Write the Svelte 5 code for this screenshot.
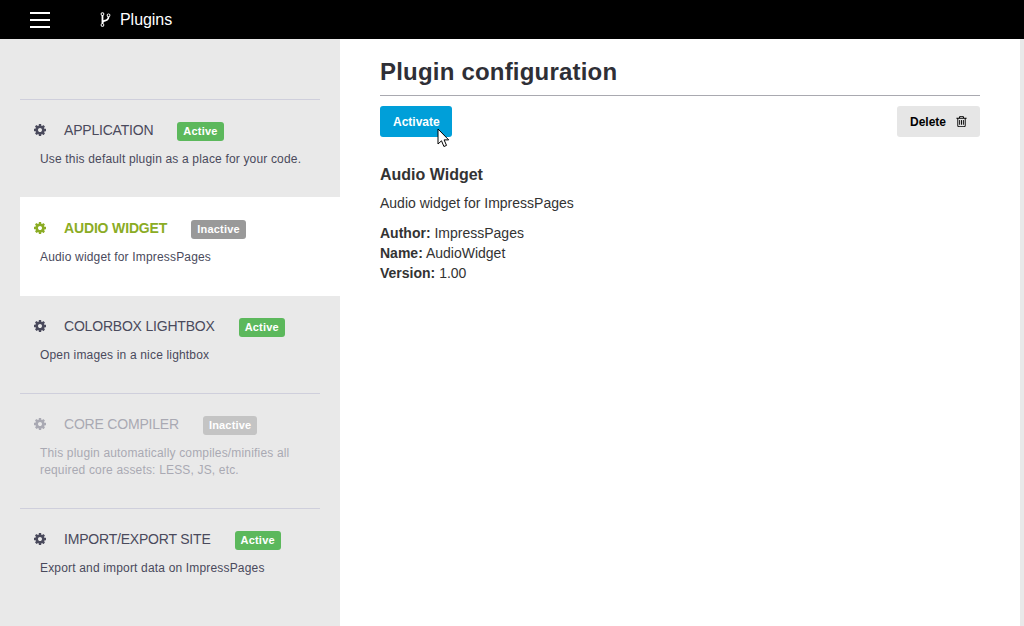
<script>
  const cog = "M1152 896q0-106-75-181t-181-75-181 75-75 181 75 181 181 75 181-75 75-181zm512-109v222q0 12-8 23t-20 13l-185 28q-19 54-39 91 35 50 107 138 10 12 10 25t-9 23q-27 37-99 108t-94 71q-12 0-26-9l-138-108q-44 23-91 38-16 136-29 186-7 28-36 28h-222q-14 0-24.5-8.5t-11.5-21.5l-28-184q-49-16-90-37l-141 107q-10 9-25 9-14 0-25-11-126-114-165-168-7-10-7-23 0-12 8-23 15-21 51-66.5t54-70.5q-27-50-41-99l-183-27q-13-2-21-12.5t-8-23.5v-222q0-12 8-23t19-13l186-28q14-46 39-92-40-57-107-138-10-12-10-24 0-10 9-23 26-36 98.5-107.5t94.5-71.5q13 0 26 10l138 107q44-23 91-38 16-136 29-186 7-28 36-28h222q14 0 24.5 8.5t11.5 21.5l28 184q49 16 90 37l142-107q9-9 24-9 13 0 25 10 129 119 165 170 7 8 7 22 0 12-8 23-15 21-51 66.5t-54 70.5q26 50 41 98l183 28q13 2 21 12.5t8 23.5z";
  const trash = "M704 736v576q0 14-9 23t-23 9h-64q-14 0-23-9t-9-23v-576q0-14 9-23t23-9h64q14 0 23 9t9 23zm256 0v576q0 14-9 23t-23 9h-64q-14 0-23-9t-9-23v-576q0-14 9-23t23-9h64q14 0 23 9t9 23zm256 0v576q0 14-9 23t-23 9h-64q-14 0-23-9t-9-23v-576q0-14 9-23t23-9h64q14 0 23 9t9 23zm128 724v-948h-896v948q0 22 7 40.5t14.5 27 10.5 8.5h832q3 0 10.5-8.5t14.5-27 7-40.5zm-672-1076h448l-48-117q-7-9-17-11h-317q-10 2-17 11zm928 32v64q0 14-9 23t-23 9h-96v948q0 83-47 143.5t-113 60.5h-832q-66 0-113-58.5t-47-141.5v-952h-96q-14 0-23-9t-9-23v-64q0-14 9-23t23-9h309l70-167q15-37 54-63t79-26h320q40 0 79 26t54 63l70 167h309q14 0 23 9t9 23z";
  const fork = "M672 1472q0-40-28-68t-68-28-68 28-28 68 28 68 68 28 68-28 28-68zm0-1152q0-40-28-68t-68-28-68 28-28 68 28 68 68 28 68-28 28-68zm640 128q0-40-28-68t-68-28-68 28-28 68 28 68 68 28 68-28 28-68zm96 0q0 52-26 96.5t-70 69.5q-2 287-226 414-67 38-203 81-128 40-169.5 71t-41.5 100v26q44 25 70 69.5t26 96.5q0 80-56 136t-136 56-136-56-56-136q0-52 26-96.5t70-69.5v-820q-44-25-70-69.5t-26-96.5q0-80 56-136t136-56 136 56 56 136q0 52-26 96.5t-70 69.5v497q54-26 154-57 55-17 87.5-29.5t70.5-31 59-39.5 40.5-51 28-69.5 8.5-91.5q-44-25-70-69.5t-26-96.5q0-80 56-136t136-56 136 56 56 136z";

  const plugins = [
    { title: "Application", desc: "Use this default plugin as a place for your code.", active: true },
    { title: "Audio Widget", desc: "Audio widget for ImpressPages", active: false, selected: true },
    { title: "Colorbox Lightbox", desc: "Open images in a nice lightbox", active: true, rule: true },
    { title: "Core Compiler", desc: "This plugin automatically compiles/minifies all required core assets: LESS, JS, etc.", active: false, muted: true, rule: true },
    { title: "Import/Export Site", desc: "Export and import data on ImpressPages", active: true }
  ];
</script>

<header class="topbar">
  <button class="burger" aria-label="Menu"><span></span><span></span><span></span></button>
  <svg class="fork" viewBox="0 0 1792 1792" aria-hidden="true"><path fill-rule="evenodd" d={fork} /></svg>
  <span class="page">Plugins</span>
</header>

<div class="layout">
  <aside class="sidebar">
    <ul class="plugins">
      {#each plugins as p (p.title)}
        <li class="plugin" class:selected={p.selected} class:muted={p.muted} class:rule={p.rule}>
          <div class="row">
            <svg class="cog" viewBox="0 0 1792 1792" aria-hidden="true"><path fill-rule="evenodd" d={cog} /></svg>
            <span class="name">{p.title}</span>
            <span class="badge" class:on={p.active}>{p.active ? "Active" : "Inactive"}</span>
          </div>
          <p class="desc">{p.desc}</p>
        </li>
      {/each}
    </ul>
  </aside>

  <main class="content">
    <h1>Plugin configuration</h1>
    <div class="actions">
      <div class="activate-wrap">
        <button class="btn primary">Activate</button>
        <svg class="cursor" viewBox="0 0 14 21" aria-hidden="true">
          <path d="M1 1v15l3.5-3.2 2.4 5.7 2.6-1.1-2.4-5.5h4.6z" fill="#fff" stroke="#000" stroke-width="1" />
        </svg>
      </div>
      <button class="btn plain">
        Delete
        <svg class="trash" viewBox="0 0 1792 1792" aria-hidden="true"><path fill-rule="evenodd" d={trash} /></svg>
      </button>
    </div>
    <h2>Audio Widget</h2>
    <p class="about">Audio widget for ImpressPages</p>
    <p class="meta">
      <b>Author:</b> ImpressPages<br />
      <b>Name:</b> AudioWidget<br />
      <b>Version:</b> 1.00
    </p>
  </main>
</div>

<style>
  :global(body) {
    margin: 0;
    background: #e9e9e9;
    font-family: "Liberation Sans", Arial, sans-serif;
    overflow: hidden;
  }

  .topbar {
    display: flex;
    align-items: center;
    height: 39px;
    background: #000;
    color: #fff;
  }

  .burger {
    display: flex;
    flex-direction: column;
    gap: 5px;
    width: 20px;
    margin-left: 30px;
    padding: 0;
    border: 0;
    background: none;
  }

  .burger span {
    display: block;
    height: 2px;
    background: #fff;
  }

  .fork {
    width: 17px;
    height: 17px;
    margin-left: 47px;
    fill: #fff;
  }

  .page {
    margin-left: 6px;
    font-size: 16px;
    letter-spacing: -0.05px;
  }

  .layout {
    display: flex;
    height: 587px;
  }

  .sidebar {
    box-sizing: border-box;
    width: 340px;
    padding: 60px 0 0 20px;
    background: #e9e9e9;
  }

  .plugins {
    margin: 0;
    padding: 0;
    list-style: none;
    border-top: 1px solid #cfcfdc;
    width: 300px;
  }

  .plugin {
    padding: 19px 0 29px 20px;
    color: #4a4a5c;
  }

  .plugin.rule {
    border-bottom: 1px solid #cfcfdc;
  }

  .plugin.selected {
    width: 300px;
    padding-top: 20px;
    padding-bottom: 30px;
    margin-right: -20px;
    background: #fff;
  }

  .plugin.muted {
    color: #a9a9b3;
  }

  .row {
    display: flex;
    align-items: center;
    height: 22px;
  }

  .cog {
    width: 14px;
    height: 14px;
    margin-right: 17px;
    fill: currentColor;
    margin-left: -7px;
  }

  .name {
    font-size: 14px;
    letter-spacing: -0.2px;
    text-transform: uppercase;
  }

  .badge {
    margin-left: 24px;
    margin-top: 3px;
    padding: 0 6px;
    height: 19px;
    line-height: 19px;
    border-radius: 3px;
    font-size: 11px;
    letter-spacing: 0.2px;
    font-weight: bold;
    color: #fff;
    background: #999;
  }

  .badge.on {
    background: #5cb85c;
  }

  .selected .name {
    color: #8bac24;
    font-weight: bold;
    letter-spacing: -0.15px;
  }

  .selected .cog {
    fill: #8bac24;
  }

  .muted .badge {
    background: #c4c4c4;
  }

  .desc {
    margin: 10px 0 0;
    width: 270px;
    font-size: 12px;
    letter-spacing: 0.17px;
    line-height: 17px;
  }

  .content {
    box-sizing: border-box;
    width: 680px;
    padding: 0 40px;
    background: #fff;
    color: #333;
  }

  h1 {
    margin: 0;
    padding: 19px 0 9px;
    border-bottom: 1px solid #a9a9b0;
    font-size: 24px;
    line-height: 28px;
    letter-spacing: 0.2px;
    color: #2f2f36;
  }

  .actions {
    display: flex;
    justify-content: space-between;
    margin-top: 10px;
  }

  .activate-wrap {
    position: relative;
  }

  .btn {
    height: 31px;
    padding: 0 13px;
    border: 0;
    border-radius: 3px;
    font-family: inherit;
    font-size: 12px;
    font-weight: bold;
  }

  .primary {
    width: 72px;
    background: #009fd9;
    color: #fff;
  }

  .plain {
    display: flex;
    align-items: center;
    gap: 9px;
    padding-right: 12px;
    background: #e6e6e6;
    color: #000;
  }

  .trash {
    width: 13px;
    height: 13px;
    fill: #000;
  }

  .cursor {
    position: absolute;
    left: 57px;
    top: 22px;
    width: 14px;
    height: 21px;
  }

  h2 {
    margin: 28px 0 0;
    font-size: 16px;
    line-height: 20px;
  }

  .about {
    margin: 8px 0 0;
    font-size: 14px;
    line-height: 20px;
  }

  .meta {
    margin: 10px 0 0;
    font-size: 14px;
    line-height: 20px;
  }
</style>
